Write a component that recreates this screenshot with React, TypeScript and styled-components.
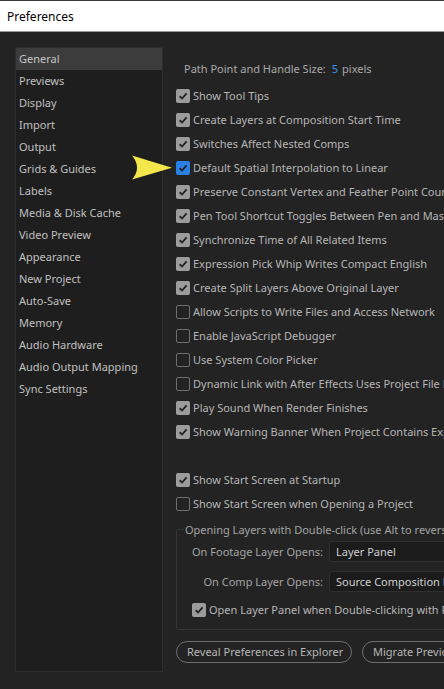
import React from "react";
import styled, { createGlobalStyle } from "styled-components";

const Global = createGlobalStyle`
  html, body { margin: 0; padding: 0; background: #232323; }
  body { width: 444px; height: 689px; overflow: hidden; }
  * { box-sizing: border-box; }
`;

const FONT = `"Noto Sans", "Open Sans", sans-serif`;

const Window = styled.div`
  position: relative;
  width: 444px;
  height: 689px;
  overflow: hidden;
  background: #232323;
  font-family: ${FONT};
  font-size: 11px;
  display: flex;
  flex-direction: column;
`;

const TitleBar = styled.div`
  height: 32px;
  flex: none;
  background: #ffffff;
  border-top: 1px solid #3a3a3a;
  border-bottom: 1px solid #9a9a9a;
  display: flex;
  align-items: center;
  padding-left: 7px;
  font-size: 12px;
  color: #000;
`;

const Body = styled.div`
  display: flex;
  padding: 15px 0 0 15px;
  flex: 1;
`;

const Sidebar = styled.div`
  width: 148px;
  height: 625px;
  flex: none;
  background: #1e1e1e;
  border: 1px solid #2d2d2d;
  display: flex;
  flex-direction: column;
`;

const NavItem = styled.div<{ $active?: boolean }>`
  height: 22px;
  display: flex;
  align-items: center;
  padding: 0 0 2px 3px;
  color: ${(p) => (p.$active ? "#c4c4c4" : "#c0c0c0")};
  background: ${(p) => (p.$active ? "#3c3c3c" : "transparent")};
`;

const Main = styled.div`
  margin-left: 13px;
  width: 640px;
  flex: none;
  padding-top: 10px;
  display: flex;
  flex-direction: column;
`;

const PathRow = styled.div`
  height: 24px;
  display: flex;
  align-items: center;
  padding: 0 0 2px 8px;
  color: #a9a9a9;
  margin-bottom: 3px;
  gap: 4px;
`;

const Blue = styled.span`
  color: #3a8ef0;
  margin-left: 2px;
`;

const CheckRow = styled.div<{ $indent?: number; $h?: number }>`
  height: ${(p) => p.$h ?? 24}px;
  display: flex;
  align-items: center;
  gap: 3px;
  color: #b6b6b6;
  white-space: nowrap;
  padding-left: ${(p) => p.$indent ?? 0}px;
  padding-bottom: 1px;
`;

const Spacer = styled.div<{ $h: number }>`
  height: ${(p) => p.$h}px;
`;

const Box = styled.span<{ $state: "on" | "off" | "blue" }>`
  width: 14px;
  height: 14px;
  flex: none;
  border-radius: 2px;
  display: inline-flex;
  align-items: center;
  justify-content: center;
  background: ${(p) =>
    p.$state === "on" ? "#9c9c9c" : p.$state === "blue" ? "#2b80e6" : "transparent"};
  border: ${(p) => (p.$state === "off" ? "1.5px solid #6f6f6f" : "none")};
`;

const Check = ({ state }: { state: "on" | "off" | "blue" }) => (
  <Box $state={state}>
    {state !== "off" && (
      <svg width="10" height="10" viewBox="0 0 10 10">
        <path d="M1.6 5.2 L4 7.6 L8.6 2.4" fill="none" stroke="#1f1f1f" strokeWidth="1.7" />
      </svg>
    )}
  </Box>
);

const Group = styled.fieldset`
  margin: 6px 0 0 0;
  padding: 4px 0 8px 0;
  border: 1px solid #353535;
  border-radius: 2px;
  min-width: 0;
`;

const Legend = styled.legend`
  padding: 0 1px;
  margin-left: 7px;
  color: #a4a4a4;
  white-space: nowrap;
`;

const FieldGrid = styled.div`
  display: grid;
  grid-template-columns: 146px 400px;
  column-gap: 6px;
  row-gap: 9px;
  align-items: center;
`;

const FieldLabel = styled.div`
  text-align: right;
  color: #a4a4a4;
  white-space: nowrap;
`;

const Select = styled.div`
  height: 21px;
  background: #1b1b1b;
  border: 1px solid #2f2f2f;
  border-radius: 3px;
  display: flex;
  align-items: center;
  padding: 0 0 1px 6px;
  color: #d0d0d0;
`;

const Buttons = styled.div`
  display: flex;
  gap: 10px;
  margin-top: 11px;
`;

const Pill = styled.div<{ $w: number }>`
  width: ${(p) => p.$w}px;
  height: 22px;
  flex: none;
  border: 1.5px solid #6e6e6e;
  border-radius: 11px;
  display: flex;
  align-items: center;
  padding: 0 0 1px 10px;
  color: #b6b6b6;
  white-space: nowrap;
`;

const Arrow = styled.svg`
  position: absolute;
  left: 130px;
  top: 154px;
`;

const nav = [
  "General", "Previews", "Display", "Import", "Output", "Grids & Guides", "Labels",
  "Media & Disk Cache", "Video Preview", "Appearance", "New Project", "Auto-Save",
  "Memory", "Audio Hardware", "Audio Output Mapping", "Sync Settings",
];

type S = "on" | "off" | "blue";
const checks: [S, string][] = [
  ["on", "Show Tool Tips"],
  ["on", "Create Layers at Composition Start Time"],
  ["on", "Switches Affect Nested Comps"],
  ["blue", "Default Spatial Interpolation to Linear"],
  ["on", "Preserve Constant Vertex and Feather Point Count when Editing Masks"],
  ["on", "Pen Tool Shortcut Toggles Between Pen and Mask Feather Tools"],
  ["on", "Synchronize Time of All Related Items"],
  ["on", "Expression Pick Whip Writes Compact English"],
  ["on", "Create Split Layers Above Original Layer"],
  ["off", "Allow Scripts to Write Files and Access Network"],
  ["off", "Enable JavaScript Debugger"],
  ["off", "Use System Color Picker"],
  ["off", "Dynamic Link with After Effects Uses Project File Name with Number"],
  ["on", "Play Sound When Render Finishes"],
  ["on", "Show Warning Banner When Project Contains Expression Errors"],
];

export default function App() {
  return (
    <Window>
      <Global />
      <TitleBar>Preferences</TitleBar>
      <Body>
        <Sidebar>
          {nav.map((n, i) => (
            <NavItem key={n} $active={i === 0}>{n}</NavItem>
          ))}
        </Sidebar>
        <Main>
          <PathRow>
            Path Point and Handle Size: <Blue>5</Blue> pixels
          </PathRow>
          {checks.map(([s, t]) => (
            <CheckRow key={t}>
              <Check state={s} />
              {t}
            </CheckRow>
          ))}
          <Spacer $h={24} />
          <CheckRow>
            <Check state="on" />
            Show Start Screen at Startup
          </CheckRow>
          <CheckRow>
            <Check state="off" />
            Show Start Screen when Opening a Project
          </CheckRow>
          <Group>
            <Legend>Opening Layers with Double-click (use Alt to reverse this behavior)</Legend>
            <FieldGrid>
              <FieldLabel>On Footage Layer Opens:</FieldLabel>
              <Select>Layer Panel</Select>
              <FieldLabel>On Comp Layer Opens:</FieldLabel>
              <Select>Source Composition Panel</Select>
            </FieldGrid>
            <Spacer $h={7} />
            <CheckRow $indent={15} $h={22}>
              <Check state="on" />
              Open Layer Panel when Double-clicking with Paint, Roto Brush, and Refine Edge Tools
            </CheckRow>
          </Group>
          <Buttons>
            <Pill $w={176}>Reveal Preferences in Explorer</Pill>
            <Pill $w={220}>Migrate Previous Version Settings...</Pill>
          </Buttons>
        </Main>
      </Body>
      <Arrow width="44" height="28" viewBox="0 0 44 28">
        <path d="M2 1.5 L42 13.8 L2 25.5 Q12 13.8 2 1.5 Z" fill="#f4e74c" />
      </Arrow>
    </Window>
  );
}
